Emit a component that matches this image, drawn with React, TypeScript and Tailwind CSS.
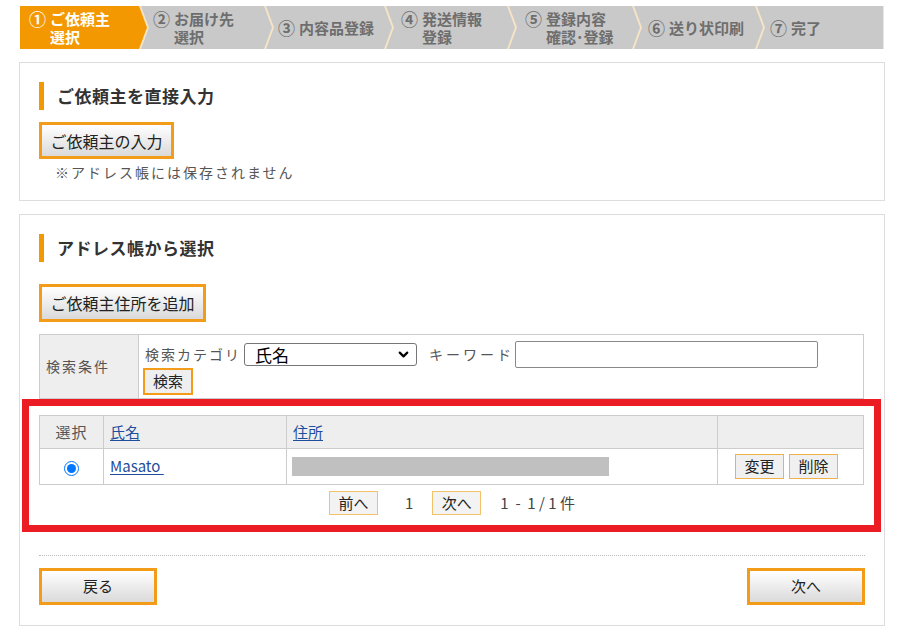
import React from "react";
import { ChevronDown } from "lucide-react";

const steps = [
  { n: "①", lines: ["ご依頼主", "選択"], cls: "w-[127px] pl-[9px] [clip-path:polygon(0_0,calc(100%_-_8px)_0,100%_50%,calc(100%_-_8px)_100%,0_100%)]", active: true },
  { n: "②", lines: ["お届け先", "選択"], cls: "w-[131px] pl-[12px] -ml-[6px] [clip-path:polygon(0_0,calc(100%_-_8px)_0,100%_50%,calc(100%_-_8px)_100%,0_100%,8px_50%)]" },
  { n: "③", lines: ["内容品登録"], cls: "w-[126px] pl-[12px] -ml-[6px] [clip-path:polygon(0_0,calc(100%_-_8px)_0,100%_50%,calc(100%_-_8px)_100%,0_100%,8px_50%)]" },
  { n: "④", lines: ["発送情報", "登録"], cls: "w-[129px] pl-[15px] -ml-[6px] [clip-path:polygon(0_0,calc(100%_-_8px)_0,100%_50%,calc(100%_-_8px)_100%,0_100%,8px_50%)]" },
  { n: "⑤", lines: ["登録内容", "確認･登録"], cls: "w-[131px] pl-[16px] -ml-[6px] [clip-path:polygon(0_0,calc(100%_-_8px)_0,100%_50%,calc(100%_-_8px)_100%,0_100%,8px_50%)]" },
  { n: "⑥", lines: ["送り状印刷"], cls: "w-[129px] pl-[14px] -ml-[6px] [clip-path:polygon(0_0,calc(100%_-_8px)_0,100%_50%,calc(100%_-_8px)_100%,0_100%,8px_50%)]" },
  { n: "⑦", lines: ["完了"], cls: "w-[126px] pl-[13px] -ml-[6px] [clip-path:polygon(0_0,100%_0,100%_100%,0_100%,8px_50%)]" },
];

function Heading({ children }: { children: React.ReactNode }) {
  return (
    <div className="flex items-center h-[28px] border-l-[5px] border-[#f39800] pl-[13px] text-[17px] font-bold text-[#333] tracking-[0.5px]">
      {children}
    </div>
  );
}

function BigButton({ label, className }: { label: string; className: string }) {
  return (
    <button className={`border-[3px] border-[#f39c1a] bg-linear-to-b from-white to-[#dadada] text-[#222] flex items-center justify-center ${className}`}>
      {label}
    </button>
  );
}

function SmallButton({ label, className }: { label: string; className: string }) {
  return (
    <button className={`w-[49px] border bg-[#f0f0f0] text-[15px] text-[#222] flex items-center justify-center ${className}`}>
      {label}
    </button>
  );
}

export default function App() {
  return (
    <div className="w-[905px] h-[630px] bg-white overflow-hidden font-['Noto_Sans_CJK_JP',sans-serif]">
      <div className="w-[866px] ml-[19px] pt-[6px]">
        {/* step bar */}
        <div className="mx-px flex h-[43px] bg-[#f7e4c6]">
          {steps.map((s, i) => (
            <div
              key={i}
              className={`flex-none h-full flex items-center text-[15px] leading-[18px] font-bold ${s.cls} ${
                s.active ? "bg-[#f39800] text-white" : "bg-[#c9c9c9] text-[#6e6e6e]"
              }`}
            >
              <div className="flex gap-[4px]">
                <span className="text-[17px] leading-[18px]">{s.n}</span>
                <span>
                  {s.lines[0]}
                  {s.lines[1] && (
                    <>
                      <br />
                      {s.lines[1]}
                    </>
                  )}
                </span>
              </div>
            </div>
          ))}
        </div>

        {/* direct input */}
        <section className="mt-[13px] border border-[#ddd] pt-[19px] px-[19px] pb-[18px]">
          <Heading>ご依頼主を直接入力</Heading>
          <BigButton label="ご依頼主の入力" className="mt-[12px] w-[135px] h-[37px] text-[16px]" />
          <p className="mt-[3px] pl-[16px] text-[14px] leading-[20px] tracking-[2px] text-[#555]">
            ※アドレス帳には保存されません
          </p>
        </section>

        {/* address book */}
        <section className="mt-[13px] border border-[#ddd] pt-[19px] px-[19px] pb-[20px]">
          <div className="h-[27px] flex">
            <Heading>アドレス帳から選択</Heading>
          </div>
          <BigButton label="ご依頼主住所を追加" className="mt-[23px] w-[167px] h-[38px] text-[16px]" />

          <table className="mt-[12px] w-[825px] border-collapse table-fixed text-[14px] text-[#555]">
            <tbody>
              <tr className="h-[63px]">
                <td className="w-[99px] bg-[#eee] border border-[#ccc] pl-[6px] tracking-[2px] align-middle">検索条件</td>
                <td className="border border-[#ccc] pl-[6px] pt-[6px] pb-[3px] align-top">
                  <div className="flex items-center h-[27px]">
                    <span className="tracking-[2px]">検索カテゴリ</span>
                    <div className="relative ml-[3px] w-[173px] h-[23px]">
                      <select
                        defaultValue="name"
                        className="appearance-none w-full h-full py-0 border border-[#767676] rounded-[3px] text-[17px] leading-[21px] text-black bg-white pl-[10px]"
                      >
                        <option value="name">氏名</option>
                        <option value="addr">住所</option>
                      </select>
                      <ChevronDown size={15} strokeWidth={3.5} className="absolute right-[6px] top-[4px] text-black pointer-events-none" />
                    </div>
                    <span className="ml-[12px] tracking-[3px]">キーワード</span>
                    <input className="ml-[1px] w-[303px] h-[27px] border border-[#888] rounded-[2px]" />
                  </div>
                  <button className="ml-[-2px] w-[50px] h-[27px] border-2 border-[#f39c1a] bg-[#efefef] text-[15px] text-[#222] flex items-center justify-center">
                    検索
                  </button>
                </td>
              </tr>
            </tbody>
          </table>

          {/* highlighted results */}
          <div className="ml-[-17px] mr-[-16px] border-[7px] border-[#ec1c24] pt-[9px] pl-[10px] pr-[9px] pb-[10px]">
            <table className="w-[825px] border-collapse table-fixed text-[15px]">
              <thead>
                <tr className="h-[33px] bg-[#eee]">
                  <th className="w-[64px] border border-[#ccc] font-normal text-[#555] tracking-[1px]">選択</th>
                  <th className="w-[183px] border border-[#ccc] font-normal text-left pl-[6px]">
                    <a className="text-[#1f4e9c] underline underline-offset-2">氏名</a>
                  </th>
                  <th className="w-[431px] border border-[#ccc] font-normal text-left pl-[6px]">
                    <a className="text-[#1f4e9c] underline underline-offset-2">住所</a>
                  </th>
                  <th className="border border-[#ccc]"></th>
                </tr>
              </thead>
              <tbody>
                <tr className="h-[36px]">
                  <td className="border border-[#ccc] text-center">
                    <input type="radio" name="sel" defaultChecked className="w-[15px] h-[15px] align-middle accent-[#0075ff]" />
                  </td>
                  <td className="border border-[#ccc] pl-[6px]">
                    <a className="text-[#1f4e9c] underline underline-offset-2">Masato&nbsp;</a>
                  </td>
                  <td className="border border-[#ccc] pl-[5px]">
                    <div className="w-[317px] h-[19px] bg-[#c0c0c0]"></div>
                  </td>
                  <td className="border border-[#ccc]">
                    <div className="flex justify-center gap-[5px] pr-[8px]">
                      <SmallButton label="変更" className="h-[25px] border-[#f0b04a]" />
                      <SmallButton label="削除" className="h-[25px] border-[#f0b04a]" />
                    </div>
                  </td>
                </tr>
              </tbody>
            </table>
            <div className="mt-[6px] flex justify-center items-center text-[15px] text-[#444]">
              <SmallButton label="前へ" className="h-[24px] border-[#f2c26a] bg-[#f3f3f3]" />
              <span className="ml-[27px]">1</span>
              <SmallButton label="次へ" className="ml-[19px] h-[24px] border-[#f2c26a] bg-[#f3f3f3]" />
              <span className="ml-[19px] whitespace-pre">1  -  1 / 1 件</span>
            </div>
          </div>

          <div className="mt-[23px] border-t border-dotted border-[#bbb]"></div>

          <div className="mt-[12px] flex justify-between">
            <BigButton label="戻る" className="w-[118px] h-[37px] text-[15px]" />
            <BigButton label="次へ" className="w-[118px] h-[37px] text-[15px]" />
          </div>
        </section>
      </div>
    </div>
  );
}
